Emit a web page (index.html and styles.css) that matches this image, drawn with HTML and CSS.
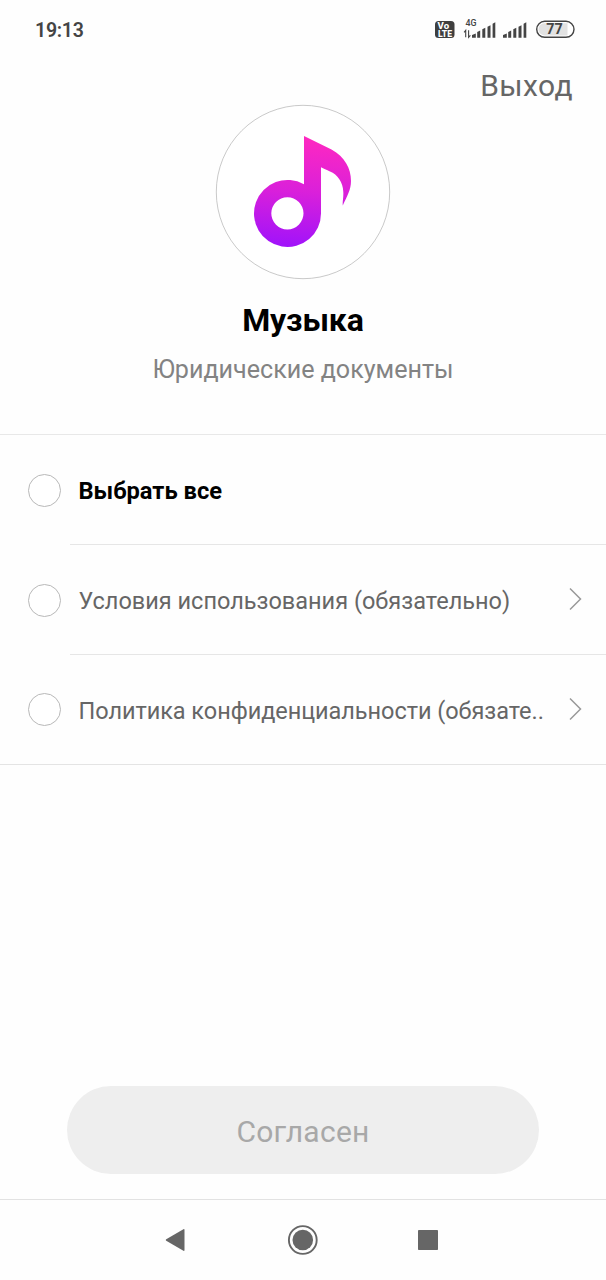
FILE: index.html
```html
<!DOCTYPE html>
<html lang="ru">
<head>
<meta charset="utf-8">
<title>Музыка</title>
<link rel="stylesheet" href="styles.css">
</head>
<body>
<div class="screen">
  <header class="status">
    <span class="clock">19:13</span>
    <svg class="status-icons" width="142" height="22" viewBox="0 0 142 22">
      <rect x="1" y="2" width="19.500" height="17" rx="3.500" fill="#3f3f3f"/>
      <text class="badge-text" x="3.600" y="10" textLength="11.500" lengthAdjust="spacingAndGlyphs">Vo</text>
      <text class="badge-text" x="4" y="17.600" textLength="14" lengthAdjust="spacingAndGlyphs">LTE</text>
      <text class="net-text" x="31.500" y="6.500" textLength="11" lengthAdjust="spacingAndGlyphs">4G</text>
      <path d="M31.700 18.300v-7l-1.600 2M34.600 11.300v7l1.800-2" fill="none" stroke="#444" stroke-width="1.100"/>
      <path d="M38 18.800v-2.800l3.800-1.500v4.300zM43.200 18.800v-5.700l3-1.500v7.200zM48.300 18.800v-8.600l3-1.500v10.100zM53.500 18.800v-11l3-1.500v12.500zM58.600 18.800v-14l2.700-1.500v15.500z" fill="#444"/>
      <path d="M69 18.800v-2.800l3.800-1.500v4.300zM74.200 18.800v-5.700l3-1.500v7.200zM79.300 18.800v-8.600l3-1.500v10.100zM84.500 18.800v-11l3-1.500v12.500zM89.600 18.800v-14l2.700-1.500v15.500z" fill="#444"/>
      <rect x="102.700" y="2.300" width="37.300" height="16" rx="8" fill="#fff" stroke="#444" stroke-width="1.400"/>
      <path d="M110.500 4.200h23v12.200h-23a6.100 6.100 0 0 1 0-12.200z" fill="#e2e2e2"/>
      <text class="battery-text" x="112.300" y="15.300" textLength="16.500" lengthAdjust="spacingAndGlyphs">77</text>
    </svg>
  </header>

  <div class="topbar"><a class="exit">Выход</a></div>

  <section class="hero">
    <svg class="logo" width="176" height="176" viewBox="-1 -1 176 176">
      <defs>
        <linearGradient id="note" gradientUnits="userSpaceOnUse" x1="92" y1="31" x2="84" y2="142">
          <stop offset="0" stop-color="#ff28c0"/>
          <stop offset=".5" stop-color="#da20da"/>
          <stop offset="1" stop-color="#a113fa"/>
        </linearGradient>
      </defs>
      <circle cx="87" cy="87" r="86.700" fill="#fff" stroke="#bbb" stroke-width=".8"/>
      <path fill="url(#note)" fill-rule="evenodd" d="M88 31L115.500 44.500C129 52 135 63.500 135 76C135 85 131 91 126.800 100.500C126.300 97 127.600 93 127.300 87C127 77 121.500 69.500 114 66.500C110.500 65 107.500 63.500 105 62.300V108.300A33.500 33.500 0 1 1 88 79.300ZM71.400 92.200a16.100 16.100 0 1 0 0 32.200a16.100 16.100 0 1 0 0-32.200z"/>
    </svg>
    <h1 class="title">Музыка</h1>
    <p class="subtitle">Юридические документы</p>
  </section>

  <main class="list">
    <div class="row">
      <span class="radio"></span>
      <div class="row-body"><span class="label label-all">Выбрать все</span></div>
    </div>
    <div class="row">
      <span class="radio"></span>
      <div class="row-body">
        <span class="label">Условия использования (обязательно)</span>
        <svg class="chevron" width="14" height="24" viewBox="0 0 14 24"><path d="M2 1.500L12.500 12L2 22.500"/></svg>
      </div>
    </div>
    <div class="row">
      <span class="radio"></span>
      <div class="row-body">
        <span class="label label-privacy">Политика конфиденциальности (обязате..</span>
        <svg class="chevron" width="14" height="24" viewBox="0 0 14 24"><path d="M2 1.500L12.500 12L2 22.500"/></svg>
      </div>
    </div>
  </main>

  <footer class="actions"><button class="agree" disabled><span>Согласен</span></button></footer>

  <nav class="navbar">
    <svg width="606" height="80" viewBox="0 0 606 80" fill="#666">
      <path d="M166.200 39.200L183.400 29.200Q184.500 28.700 184.500 30V50Q184.500 51.300 183.400 50.800L166.200 40.800Q165.200 40 166.200 39.200z"/>
      <circle cx="302.800" cy="40" r="10.300"/>
      <circle cx="302.800" cy="40" r="13.900" fill="none" stroke="#666" stroke-width="1.900"/>
      <rect x="418" y="30" width="20" height="20" rx=".8"/>
    </svg>
  </nav>
</div>
</body>
</html>
```
FILE: styles.css
```css
* { box-sizing: border-box; }
body {
  margin: 0;
  background: #fefefe;
  font-family: Roboto, "Noto Sans", sans-serif;
}
.screen {
  display: flex;
  flex-direction: column;
  width: 606px;
  height: 1280px;
  overflow: hidden;
}
.status {
  display: flex;
  justify-content: space-between;
  align-items: center;
  height: 60px;
  padding: 0 30px 0 35px;
}
.clock {
  padding-top: 1px;
  font-size: 19.500px;
  font-weight: 600;
  letter-spacing: -.25px;
  color: #444;
}
.status-icons { display: block; }
.badge-text { font-size: 8.500px; font-weight: 800; fill: #fff; }
.net-text { font-size: 9px; font-weight: 500; fill: #444; }
.battery-text { font-size: 14px; font-weight: 700; fill: #444; }
.topbar {
  display: flex;
  justify-content: flex-end;
  height: 44px;
  padding-right: 33px;
}
.exit {
  padding-top: 8px;
  font-size: 30px;
  line-height: 36px;
  letter-spacing: .4px;
  color: #666;
}
.hero {
  display: flex;
  flex-direction: column;
  align-items: center;
  height: 330px;
}
.logo { display: block; }
.title {
  margin: 20px 0 0;
  font-size: 32px;
  line-height: 40px;
  font-weight: 700;
  letter-spacing: -.1px;
  color: #000;
}
.subtitle {
  margin: 13px 0 0;
  font-size: 25.100px;
  line-height: 33px;
  color: #838383;
}
.list {
  border-top: 1px solid #e8e8e8;
  border-bottom: 1px solid #e4e4e4;
}
.row {
  display: flex;
  align-items: center;
  height: 110px;
  padding-left: 28px;
}
.row:last-child { height: 109px; }
.radio {
  width: 33px;
  height: 33px;
  margin-right: 9px;
  border: 1px solid #b8b8b8;
  border-radius: 50%;
  background: #fff;
}
.row-body {
  display: flex;
  flex: 1;
  align-items: center;
  justify-content: space-between;
  height: 100%;
  padding: 2px 24px 0 8.500px;
  border-bottom: 1px solid #e6e6e6;
}
.row:last-child .row-body { border-bottom: 0; }
.label {
  font-size: 23.500px;
  line-height: 32px;
  white-space: nowrap;
  color: #666;
}
.label-all { font-size: 23.700px; font-weight: 700; color: #000; }
.label-privacy { letter-spacing: -.05px; }
.chevron {
  margin-bottom: 4px;
  fill: none;
  stroke: #999;
  stroke-width: 1.500;
}
.actions {
  display: flex;
  justify-content: center;
  margin-top: auto;
  padding-bottom: 25px;
}
.agree {
  width: 472px;
  height: 88px;
  padding: 3px 0 0;
  border: 0;
  border-radius: 44px;
  background: #eee;
  font-family: inherit;
  font-size: 30px;
  letter-spacing: .25px;
  color: #a8a8a8;
}
.navbar {
  height: 81px;
  border-top: 1px solid #e2e2e2;
}
.navbar svg { display: block; }
```
